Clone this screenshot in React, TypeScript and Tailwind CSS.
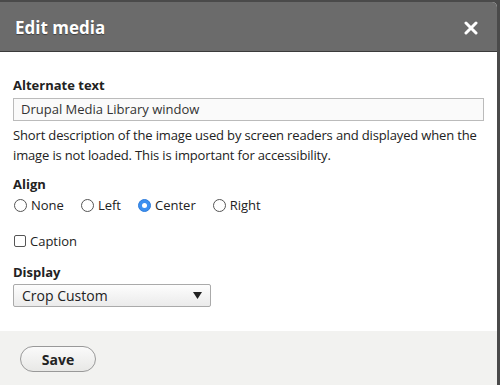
import React from "react";

function Radio({ label, checked }: { label: string; checked?: boolean }) {
  return (
    <label className="flex items-center gap-[4px]">
      {checked ? (
        <span className="flex h-[13px] w-[13px] items-center justify-center rounded-full border border-[#2f7ddb] bg-[#3b8ff0]">
          <span className="h-[5px] w-[5px] rounded-full bg-white" />
        </span>
      ) : (
        <span className="h-[13px] w-[13px] rounded-full border border-[#555] bg-white" />
      )}
      <span>{label}</span>
    </label>
  );
}

export default function App() {
  return (
    <div
      className="h-[385px] w-[500px] bg-[#4a4a4a] pt-[2px] pr-[3px] text-[13px] text-[#222]"
      style={{ fontFamily: '"Open Sans", "DejaVu Sans", sans-serif' }}
    >
      <div className="flex h-[383px] flex-col overflow-hidden rounded-tr-[5px] bg-white">
        <div className="flex h-[50px] items-center justify-between border-b border-[#3a3a3a] bg-[#6b6b6b] pl-[15px] pr-[19px] pt-[2px]">
          <span className="text-[17px] font-bold text-white [text-shadow:0_1px_1px_rgba(0,0,0,0.4)]">
            Edit media
          </span>
          <svg width="14" height="14" viewBox="0 0 14 14">
            <path d="M2 2 L12 12 M12 2 L2 12" stroke="white" strokeWidth="3" strokeLinecap="round" />
          </svg>
        </div>
        <div className="flex-1 px-[13px] pt-[24px]">
          <div className="font-bold leading-[18px]">Alternate text</div>
          <div className="mt-[4px] flex h-[23px] w-[471px] items-center border border-[#bbb] bg-[#fafafa] px-[7px] text-[#333]">
            Drupal Media Library window
          </div>
          <div className="mt-[4px] leading-[20px] tracking-[-0.15px]">
            Short description of the image used by screen readers and displayed when the image is
            not loaded. This is important for accessibility.
          </div>
          <div className="mt-[10px] font-bold leading-[18px]">Align</div>
          <div className="mt-[3px] flex items-center gap-[17px] pl-[1px]">
            <Radio label="None" />
            <Radio label="Left" />
            <Radio label="Center" checked />
            <Radio label="Right" />
          </div>
          <label className="mt-[16px] flex items-center gap-[4px] pl-[1px]">
            <span className="h-[12px] w-[12px] rounded-[2px] border border-[#555] bg-white" />
            <span>Caption</span>
          </label>
          <div className="mt-[12px] font-bold leading-[18px]">Display</div>
          <div className="mt-[3px] flex h-[23px] w-[198px] items-center justify-between rounded-[2px] border border-[#aaa] bg-[linear-gradient(#fdfdfd,#ebebeb)] pl-[8px] pr-[8px]">
            <span className="text-[14px]">Crop Custom</span>
            <svg width="9" height="7" viewBox="0 0 9 7">
              <path d="M0 0 H9 L4.5 7 Z" fill="#222" />
            </svg>
          </div>
        </div>
        <div className="h-[54px] bg-[#f2f2f0] pl-[20px] pt-[15px]">
          <button className="h-[26px] w-[76px] rounded-full border border-[#999] bg-[linear-gradient(#fafafa,#e8e8e6)] font-bold text-[14px] text-[#222]">
            Save
          </button>
        </div>
      </div>
    </div>
  );
}
